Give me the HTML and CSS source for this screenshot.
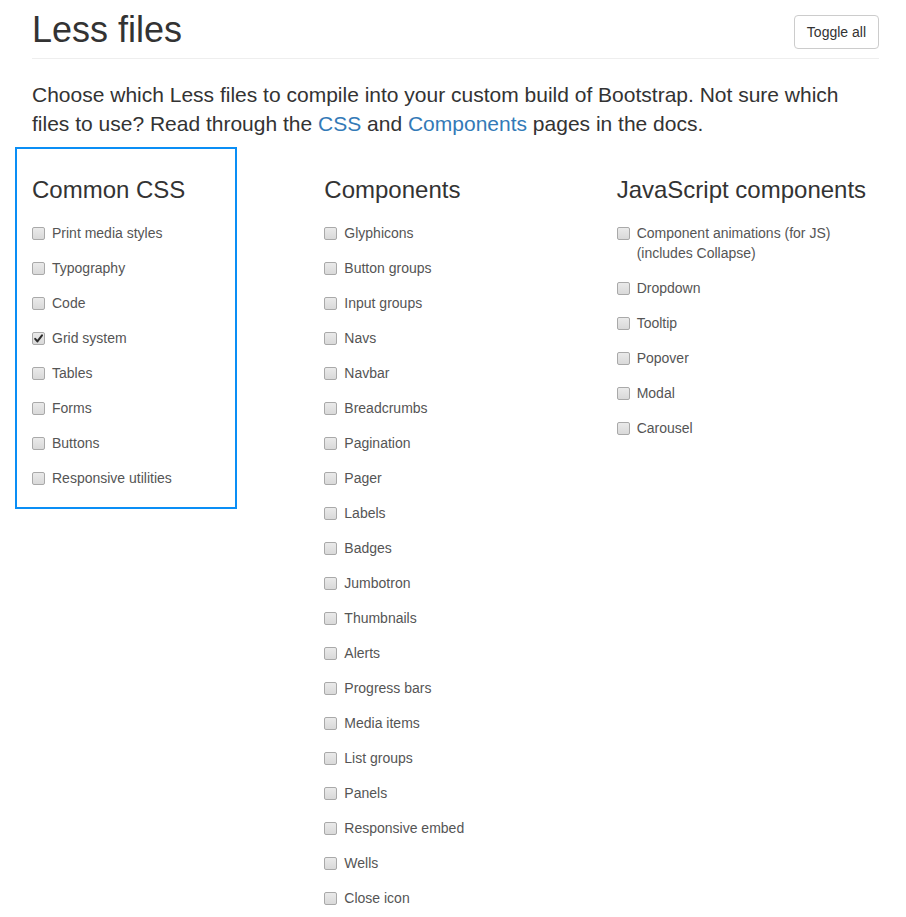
FILE: index.html
```html
<!DOCTYPE html>
<html>
<head>
<meta charset="utf-8">
<title>Less files</title>
<link rel="stylesheet" href="styles.css">
</head>
<body>
<div class="container">
  <div class="page-header">
    <button class="btn" type="button">Toggle all</button>
    <h1>Less files</h1>
  </div>
  <p class="lead">Choose which Less files to compile into your custom build of Bootstrap. Not sure which files to use? Read through the <a href="#">CSS</a> and <a href="#">Components</a> pages in the docs.</p>
  <div class="row">
    <div class="col">
      <h3>Common CSS</h3>
      <div class="checkbox"><label><span class="box"></span>Print media styles</label></div>
      <div class="checkbox"><label><span class="box"></span>Typography</label></div>
      <div class="checkbox"><label><span class="box"></span>Code</label></div>
      <div class="checkbox"><label><span class="box checked"><svg width="13" height="13" viewBox="0 0 13 13"><path d="M3.2 6.8 L5.4 9.4 L10 3.4" fill="none" stroke="#2b2b2b" stroke-width="2" stroke-linecap="round" stroke-linejoin="round"/></svg></span>Grid system</label></div>
      <div class="checkbox"><label><span class="box"></span>Tables</label></div>
      <div class="checkbox"><label><span class="box"></span>Forms</label></div>
      <div class="checkbox"><label><span class="box"></span>Buttons</label></div>
      <div class="checkbox"><label><span class="box"></span>Responsive utilities</label></div>
    </div>
    <div class="col">
      <h3>Components</h3>
      <div class="checkbox"><label><span class="box"></span>Glyphicons</label></div>
      <div class="checkbox"><label><span class="box"></span>Button groups</label></div>
      <div class="checkbox"><label><span class="box"></span>Input groups</label></div>
      <div class="checkbox"><label><span class="box"></span>Navs</label></div>
      <div class="checkbox"><label><span class="box"></span>Navbar</label></div>
      <div class="checkbox"><label><span class="box"></span>Breadcrumbs</label></div>
      <div class="checkbox"><label><span class="box"></span>Pagination</label></div>
      <div class="checkbox"><label><span class="box"></span>Pager</label></div>
      <div class="checkbox"><label><span class="box"></span>Labels</label></div>
      <div class="checkbox"><label><span class="box"></span>Badges</label></div>
      <div class="checkbox"><label><span class="box"></span>Jumbotron</label></div>
      <div class="checkbox"><label><span class="box"></span>Thumbnails</label></div>
      <div class="checkbox"><label><span class="box"></span>Alerts</label></div>
      <div class="checkbox"><label><span class="box"></span>Progress bars</label></div>
      <div class="checkbox"><label><span class="box"></span>Media items</label></div>
      <div class="checkbox"><label><span class="box"></span>List groups</label></div>
      <div class="checkbox"><label><span class="box"></span>Panels</label></div>
      <div class="checkbox"><label><span class="box"></span>Responsive embed</label></div>
      <div class="checkbox"><label><span class="box"></span>Wells</label></div>
      <div class="checkbox"><label><span class="box"></span>Close icon</label></div>
    </div>
    <div class="col">
      <h3>JavaScript components</h3>
      <div class="checkbox"><label><span class="box"></span>Component animations (for JS)<br>(includes Collapse)</label></div>
      <div class="checkbox"><label><span class="box"></span>Dropdown</label></div>
      <div class="checkbox"><label><span class="box"></span>Tooltip</label></div>
      <div class="checkbox"><label><span class="box"></span>Popover</label></div>
      <div class="checkbox"><label><span class="box"></span>Modal</label></div>
      <div class="checkbox"><label><span class="box"></span>Carousel</label></div>
    </div>
  </div>
</div>
<div class="highlight"></div>
</body>
</html>
```
FILE: styles.css
```css
html, body {
  margin: 0;
  padding: 0;
  background: #fff;
}
body {
  font-family: "Liberation Sans", Arial, sans-serif;
  font-size: 14px;
  line-height: 20px;
  color: #333;
  position: relative;
  overflow: hidden;
}
.container {
  width: 847px;
  margin-left: 32px;
}
.page-header {
  padding: 10px 0 8px;
  border-bottom: 1px solid #eee;
}
.page-header h1 {
  margin: 0;
  font-size: 36px;
  line-height: 40px;
  font-weight: 400;
  color: #333;
}
.btn {
  float: right;
  margin-top: 5px;
  height: 34px;
  padding: 6px 12px;
  font-family: "Liberation Sans", Arial, sans-serif;
  font-size: 14px;
  line-height: 20px;
  color: #333;
  background: #fff;
  border: 1px solid #ccc;
  border-radius: 4px;
}
.lead {
  margin: 21px 0 0;
  font-size: 21px;
  line-height: 29.4px;
  font-weight: 400;
}
.lead a {
  color: #337ab7;
  text-decoration: none;
}
.row {
  display: grid;
  grid-template-columns: repeat(3, 1fr);
  margin: 0 -15px;
  padding-top: 38px;
}
.col {
  padding: 0 15px;
}
.col h3 {
  margin: 0 0 20px;
  font-size: 24px;
  line-height: 26.4px;
  font-weight: 400;
  color: #333;
}
.checkbox {
  margin: 0 0 15px;
}
.checkbox label {
  display: block;
  position: relative;
  padding-left: 20px;
  min-height: 20px;
  line-height: 20px;
  color: #555;
}
.box {
  position: absolute;
  left: 0;
  top: 4px;
  width: 11px;
  height: 11px;
  border: 1px solid #a9a9a9;
  border-radius: 2px;
  background: linear-gradient(#eaeaea, #d9d9d9);
  box-sizing: content-box;
}
.box svg {
  position: absolute;
  left: -1px;
  top: -1px;
}
.highlight {
  position: absolute;
  left: 15px;
  top: 147px;
  width: 218px;
  height: 358px;
  border: 2px solid #0a8ef5;
  pointer-events: none;
}
```
